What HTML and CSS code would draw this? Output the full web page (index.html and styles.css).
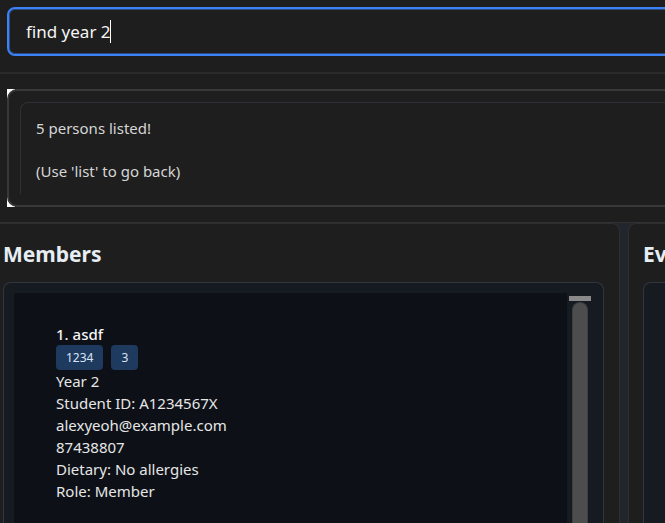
FILE: index.html
```html
<!DOCTYPE html>
<html lang="en">
<head>
<meta charset="utf-8">
<title>Members</title>
<link rel="stylesheet" href="styles.css">
</head>
<body>
<div class="app">
  <form class="command-bar">
    <input class="command-input" type="text" aria-label="Command" value="find year 2">
    <span class="caret"></span>
  </form>
  <section class="result-area">
    <div class="result-back">
      <div class="result-frame">
        <div class="result-text">
          <p>5 persons listed!</p>
          <p>(Use 'list' to go back)</p>
        </div>
      </div>
    </div>
  </section>
  <main class="columns">
    <section class="panel">
      <h2>Members</h2>
      <div class="list-frame">
        <div class="list">
          <article class="person">
            <h3>1. asdf</h3>
            <div class="tags"><span class="tag">1234</span><span class="tag">3</span></div>
            <p>Year 2</p>
            <p>Student ID: A1234567X</p>
            <p>alexyeoh@example.com</p>
            <p>87438807</p>
            <p>Dietary: No allergies</p>
            <p>Role: Member</p>
          </article>
        </div>
        <div class="scrollbar">
          <div class="scroll-cap"></div>
          <div class="scroll-thumb"></div>
        </div>
      </div>
    </section>
    <section class="panel panel-events">
      <h2>Events</h2>
      <div class="list-frame"></div>
    </section>
  </main>
</div>
</body>
</html>
```
FILE: styles.css
```css
* {
  box-sizing: border-box;
}

body {
  margin: 0;
  background: #1e1e1e;
  color: #e6e6e6;
  font-family: "Segoe UI", "Noto Sans", "Open Sans", sans-serif;
  font-size: 15px;
  line-height: 22px;
}

h2, h3, p {
  margin: 0;
}

.app {
  display: flex;
  flex-direction: column;
  height: 100vh;
  overflow: hidden;
}

.command-bar {
  position: relative;
  flex: none;
  padding: 7px 0 16px 7px;
  border-bottom: 2px solid #2b2b2b;
}

.command-input {
  display: block;
  width: calc(100% + 16px);
  height: 49px;
  padding: 0 17px;
  border: 2px solid #3b82f6;
  border-radius: 8px;
  outline: none;
  background: #1e1e1e;
  box-shadow: inset 0 0 0 1px #2a4a80;
  color: #f5f5f5;
  font: inherit;
  font-size: 17px;
}

.caret {
  position: absolute;
  top: 20px;
  left: 110px;
  width: 1px;
  height: 23px;
  background: #ffffff;
}

.result-area {
  flex: none;
  padding: 15px 0 15px 7px;
  border-bottom: 1px solid #303030;
}

.result-back {
  width: calc(100% + 16px);
  background: linear-gradient(90deg, #ffffff 8px, #1e1e1e 8px);
}

.result-frame {
  height: 118px;
  padding: 11px;
  border: 2px solid #383838;
  border-radius: 10px;
  background: #1e1e1e;
}

.result-text {
  display: flex;
  flex-direction: column;
  gap: 21px;
  height: 92px;
  padding: 14px 15px;
  border: 1px solid #2d3036;
  border-width: 1px 0 0 1px;
  border-radius: 8px 0 0 0;
  color: #d6d6d6;
}

.columns {
  flex: 1;
  display: grid;
  grid-template-columns: minmax(0, 1fr) 37px;
  gap: 8px;
  min-height: 0;
  background: #21262d;
}

.panel {
  display: flex;
  flex-direction: column;
  min-width: 0;
  padding: 15px 15px 0 3px;
  border: 1px solid #2e2e2e;
  border-width: 1px 1px 0 0;
  border-radius: 0 8px 0 0;
  background: #1e1e1e;
}

.panel-events {
  width: 320px;
  padding-left: 14px;
  border-width: 1px 0 0 1px;
  border-radius: 8px 0 0 0;
}

h2 {
  margin-bottom: 13px;
  color: #e6edf3;
  font-size: 21px;
  line-height: 30px;
  font-weight: 700;
}

.list-frame {
  flex: 1;
  display: flex;
  min-height: 0;
  padding: 10px 12px 0 10px;
  border: 1px solid #30363d;
  border-bottom: 0;
  border-radius: 8px 8px 0 0;
  background: #161b22;
}

.list {
  flex: 1;
  padding: 30px 42px;
  border-radius: 3px 0 0 0;
  background: #0d1117;
}

.person {
  color: #e6e6e6;
}

h3 {
  color: #f5f5f5;
  font-size: 15px;
  line-height: 22px;
  font-weight: 500;
}

.tags {
  display: flex;
  gap: 8px;
}

.tag {
  padding: 0 10px;
  border-radius: 4px;
  background: #1f3a5f;
  color: #d6e4f5;
  font-size: 12px;
  line-height: 25px;
}

.scrollbar {
  display: flex;
  flex-direction: column;
  align-items: center;
  width: 22px;
  margin-left: 2px;
  padding-top: 3px;
}

.scroll-cap {
  width: 22px;
  height: 5px;
  background: #8a8a8a;
}

.scroll-thumb {
  flex: 1;
  width: 16px;
  margin-top: 1px;
  border: 1px solid #3d3f42;
  border-bottom: 0;
  border-radius: 8px 8px 0 0;
  background: #4d4d4d;
}
```
